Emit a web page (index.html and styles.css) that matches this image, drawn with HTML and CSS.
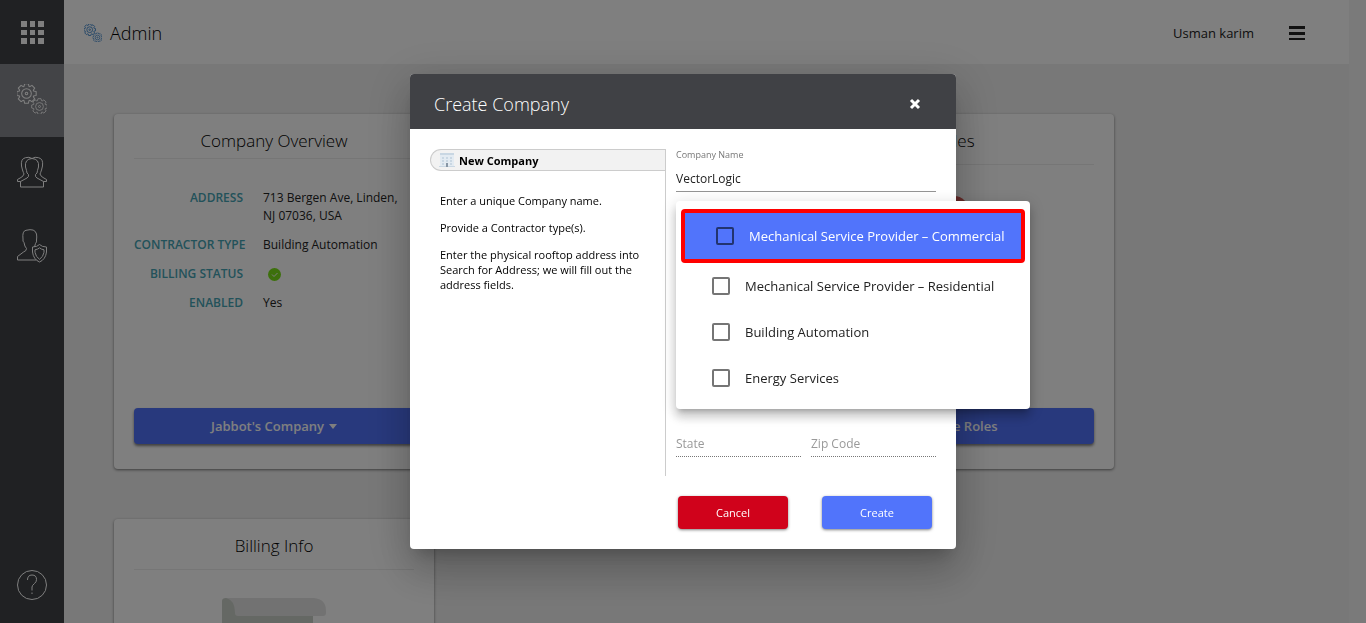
FILE: index.html
```html
<!DOCTYPE html>
<html lang="en">
<head>
<meta charset="utf-8">
<meta name="viewport" content="width=device-width, initial-scale=1">
<title>Admin</title>
<link rel="stylesheet" href="styles.css">
</head>
<body>
<svg class="defs" aria-hidden="true">
  <symbol id="gear" viewBox="-10 -10 20 20">
    <path d="M-2.4-6.8L-1.8-9.2H1.8L2.4-6.8 3.1-6.5 5.2-7.8 7.8-5.2 6.5-3.1 6.8-2.4 9.2-1.8V1.8L6.8 2.4 6.5 3.1 7.8 5.2 5.2 7.8 3.1 6.5 2.4 6.8 1.8 9.2H-1.8L-2.4 6.8-3.1 6.5-5.2 7.8-7.8 5.2-6.5 3.1-6.8 2.4-9.2 1.8V-1.8L-6.8-2.4-6.5-3.1-7.8-5.2-5.2-7.8-3.1-6.5Z"/>
    <circle r="4.6"/><circle r="1.2"/>
  </symbol>
  <symbol id="gears" viewBox="0 0 30 30">
    <use href="#gear" x="-1" y="-1" width="21" height="21"/>
    <use href="#gear" x="14" y="14" width="17" height="17"/>
  </symbol>
</svg>

<div class="app">
  <nav class="sidebar" aria-label="Main">
    <button class="side-item side-apps" aria-label="Apps">
      <svg width="23" height="23" viewBox="0 0 23 23" fill="currentColor"><path d="M0 0h6v6H0zM9 0h5v6H9zM17 0h6v6h-6zM0 9h6v5H0zM9 9h5v5H9zM17 9h6v5h-6zM0 17h6v6H0zM9 17h5v6H9zM17 17h6v6h-6z"/></svg>
    </button>
    <a class="side-item active" href="#" aria-label="Admin"><svg class="line" width="30" height="30"><use href="#gears"/></svg></a>
    <a class="side-item" href="#" aria-label="Users">
      <svg class="line" width="32" height="32" viewBox="0 0 32 32"><path d="M4.500 31v-5.500l6.500-3.500q2-1 1.500-3.500q-2-1-2-4l-1-3.500q-1-8 6.500-8.500q7.500.5 6.500 8.500l-1 3.500q0 3-2 4q-.5 2.500 1.500 3.500l6.500 3.500V31Z"/><path d="M16 2.500q-3-2-6.500-.8q-5 1-4 8.300l1 4q1 3 1.500 4q-.5 2-3 3.500L1.500 23.500v2h3M16 2.500q3-2 6.500-.8q5 1 4 8.300l-1 4q-1 3-1.500 4q.5 2 3 3.500l3.500 2v2h-3"/></svg>
    </a>
    <a class="side-item" href="#" aria-label="Permissions">
      <svg class="line" width="32" height="32" viewBox="0 0 32 32"><path d="M20.500 31H1.500v-3.500l6-4.500q3-1 3-3.500q-2-2-2.500-6Q6.500 12.500 7 10Q6 2 10 1.300q9-2.300 10.500 3.700q.5 3 0 6q.5 2-1 3.500L18.500 18"/><path d="M23.500 15.500q2.500 2.500 7 2.500v5q-1 7.500-7 10q-6-2.500-7-10v-5q4.500 0 7-2.500ZM23.500 18.800q1.500 1.500 4.500 2v2.500q-.7 4.500-4.500 7q-3.800-2.500-4.500-7v-2.500q3-.5 4.500-2Z"/></svg>
    </a>
    <a class="side-item side-help" href="#" aria-label="Help">
      <svg class="line" width="32" height="32" viewBox="0 0 32 32"><circle cx="16" cy="16" r="14.500"/><path d="M11.500 11q0-5 4.500-5t4.500 4.500q0 2.500-2 4Q16 16.500 16 18v3.500M16 23.500v1.500"/></svg>
    </a>
  </nav>

  <div class="page">
    <header class="topbar">
      <svg class="line brand" width="18" height="18"><use href="#gears"/></svg>
      <h1>Admin</h1>
      <span class="user">Usman karim</span>
      <button class="burger" aria-label="Menu"><svg width="16" height="14" viewBox="0 0 16 14" fill="currentColor"><path d="M0 0h16v3H0zM0 6h16v3H0zM0 12h16v2H0z"/></svg></button>
    </header>
    <main class="cards">
      <section class="card overview">
        <h2>Company Overview</h2>
        <dl>
          <dt>ADDRESS</dt><dd>713 Bergen Ave, Linden, NJ 07036, USA</dd>
          <dt>CONTRACTOR TYPE</dt><dd>Building Automation</dd>
          <dt>BILLING STATUS</dt><dd><svg class="ok" width="13" height="13" viewBox="0 0 13 13" role="img" aria-label="Active"><circle cx="6.500" cy="6.500" r="6.500" fill="#7ae018"/><path d="M4 6.500l2 2 3.500-3.500" fill="none" stroke="#fff"/></svg></dd>
          <dt>ENABLED</dt><dd>Yes</dd>
        </dl>
        <button class="wide-btn">Jabbot's Company <span class="caret"></span></button>
      </section>
      <section class="card roles">
        <h2>Roles</h2>
        <span class="dot"></span>
        <button class="wide-btn">Manage Roles</button>
      </section>
      <section class="card billing">
        <h2>Billing Info</h2>
        <svg class="receipt" width="104" height="80" viewBox="0 0 104 80"><path fill="#cad0c8" d="M0 3Q0 0 4 0h87v80H0Z"/><path fill="#e5e5e5" d="M4 0h88q12 1 12 13v2q0 3-3 3H16q-3 0-3-3Q13 2 4 0Z"/></svg>
      </section>
    </main>
  </div>
  <div class="gutter"></div>
</div>

<div class="backdrop">
  <div class="dialog" role="dialog" aria-modal="true" aria-labelledby="dlg-title">
    <header class="dialog-head">
      <h2 id="dlg-title">Create Company</h2>
      <button class="close" aria-label="Close"><svg width="10" height="10" viewBox="0 0 10 10"><path d="M1 1l8 8M9 1L1 9" stroke="currentColor" stroke-width="3"/></svg></button>
    </header>
    <form class="dialog-body">
      <aside class="steps">
        <h3 class="step">
          <svg width="16" height="16" viewBox="0 0 16 16"><path fill="#e3ebf2" d="M1 3h14v12H1z"/><path fill="#c9d7e3" d="M1 1h14v2H1zM3 5h2v2H3zM7 5h2v2H7zM11 5h2v2h-2zM3 8h2v2H3zM7 8h2v2H7zM11 8h2v2h-2zM3 11h2v2H3zM11 11h2v2h-2zM0 14h16v1H0z"/><path fill="#8796a5" d="M7 11h2v4H7z"/></svg>
          New Company
        </h3>
        <p>Enter a unique Company name.</p>
        <p>Provide a Contractor type(s).</p>
        <p>Enter the physical rooftop address into Search for Address; we will fill out the address fields.</p>
      </aside>
      <div class="fields">
        <div class="field">
          <label for="cname">Company Name</label>
          <input id="cname" type="text" value="VectorLogic">
          <div class="menu">
            <label class="option selected"><input type="checkbox"><span>Mechanical Service Provider – Commercial</span></label>
            <label class="option"><input type="checkbox"><span>Mechanical Service Provider – Residential</span></label>
            <label class="option"><input type="checkbox"><span>Building Automation</span></label>
            <label class="option"><input type="checkbox"><span>Energy Services</span></label>
          </div>
        </div>
        <div class="pair">
          <input class="dotted" type="text" placeholder="State" aria-label="State" disabled>
          <input class="dotted" type="text" placeholder="Zip Code" aria-label="Zip Code" disabled>
        </div>
        <div class="actions">
          <button type="button" class="btn cancel">Cancel</button>
          <button type="button" class="btn create">Create</button>
        </div>
      </div>
    </form>
  </div>
</div>
</body>
</html>
```

FILE: styles.css
```css
* { box-sizing: border-box; }
body { margin: 0; font-family: "Open Sans", "Noto Sans", sans-serif; font-size: 12px; color: #222; overflow: hidden; }
h1, h2, h3, p, dl, dd { margin: 0; font-weight: 400; }
button, input { font: inherit; }
button { border: 0; padding: 0; background: none; color: inherit; cursor: pointer; }
svg { display: block; overflow: visible; }
.defs { position: absolute; width: 0; height: 0; }
.line { fill: none; stroke: currentColor; stroke-width: 1; }

.app { display: grid; grid-template-columns: 64px 1fr 17px; height: 100vh; overflow: hidden; }
.sidebar { display: flex; flex-direction: column; background: #404246; color: #fff; }
.side-item { display: flex; align-items: center; justify-content: center; width: 100%; height: 73px; flex: none; padding-bottom: 4px; color: #fff; }
.side-apps { height: 64px; padding: 1px 0 0 1px; }
.active { background: #86888e; }
.side-help { margin-top: auto; height: 76px; padding: 0; }
.page { background: #f1f1f1; min-width: 0; overflow: hidden; }
.gutter { background: #f5f5f5; }

.topbar { display: flex; align-items: center; height: 64px; padding: 1px 44px 0 20px; background: #fff; }
.brand { color: #4a8ed0; stroke-width: 1.5; }
.topbar h1 { margin-left: 8px; font-size: 18px; font-weight: 300; color: #000; }
.user { margin-left: auto; font-size: 13px; }
.burger { margin-left: 35px; }

.cards { display: grid; grid-template-columns: repeat(3, 320px); grid-template-rows: 355px 355px; gap: 50px 20px; padding: 50px; }
.card { display: flex; flex-direction: column; padding: 12px 20px 25px; background: #fff; border-radius: 4px; box-shadow: 0 1px 3px rgba(0,0,0,.5); }
.card h2 { height: 39px; line-height: 30px; border-bottom: 1px solid #ececec; text-align: center; font-size: 17px; font-weight: 300; color: #000; }
.card.overview h2 { height: 33px; }
.roles { grid-column: 3; }
.overview dl { display: grid; grid-template-columns: 109px 1fr; column-gap: 20px; margin-top: 30px; line-height: 18px; row-gap: 11px; }
.overview dt { color: #45a4b4; text-align: right; font-weight: 600; white-space: nowrap; }
.overview dd { padding-right: 10px; }
.ok { margin: 3px 0 0 5px; }
.wide-btn { display: flex; align-items: center; justify-content: center; gap: 5px; height: 36px; margin-top: auto; flex: none; border-radius: 4px; background: #5173fb; color: #fff; font-size: 13px; font-weight: 600; box-shadow: 0 2px 3px rgba(0,0,0,.5); }
.caret { border: 4px solid transparent; border-top: 5px solid #fff; border-bottom: 0; }
.dot { width: 30px; height: 30px; margin: 31px auto 0; border-radius: 50%; background: #d65a56; }
.receipt { margin: 28px auto 0; }

.backdrop { position: fixed; inset: 0; display: grid; place-items: center; background: rgba(0,0,0,.5); }
.dialog { width: 546px; max-width: 80vw; border-radius: 4px; background: #fff; color: #000; box-shadow: 0 11px 15px -7px rgba(0,0,0,.2), 0 24px 38px 3px rgba(0,0,0,.14), 0 9px 46px 8px rgba(0,0,0,.12); }
.dialog-head { display: flex; align-items: center; justify-content: space-between; height: 55px; padding: 5px 36px 0 24px; border-radius: 4px 4px 0 0; background: #404145; color: #fff; }
.dialog-head h2 { font-size: 18px; font-weight: 300; }
.dialog-body { display: grid; grid-template-columns: 236px 1fr; column-gap: 10px; padding: 20px; }
.steps { height: 327px; border-right: 1px solid #ccc; font-size: 11px; line-height: 15px; }
.step { display: flex; align-items: center; gap: 4px; height: 22px; margin-bottom: 22px; padding-left: 8px; border: 1px solid #ccc; border-right: 0; border-radius: 11px 0 0 11px; background: #f2f2f2; font-size: 11px; font-weight: 700; }
.steps p { margin: 0 10px 12px; }
.fields { display: flex; flex-direction: column; }
.field { position: relative; }
.field > label { display: block; font-size: 9px; line-height: 12px; color: #777; }
.field > input { display: block; width: 100%; height: 31px; padding: 4px 0 0; border: 0; border-bottom: 1px solid #949494; outline: 0; font-size: 12px; color: #222; }
.menu { position: absolute; top: 52px; left: 0; width: 354px; padding: 8px 5px; border-radius: 4px; background: #fff; box-shadow: 0 5px 5px -3px rgba(0,0,0,.2), 0 8px 10px 1px rgba(0,0,0,.14), 0 3px 14px 2px rgba(0,0,0,.12); }
.option { display: flex; align-items: center; gap: 15px; height: 46px; padding-left: 31px; font-size: 13px; white-space: nowrap; color: #222; }
.option input { appearance: none; flex: none; width: 18px; height: 18px; margin: 0; border: 2px solid #757575; border-radius: 2px; }
.selected { height: 54px; border: 4px solid #f00; border-radius: 4px; background: #5174fb; color: #fff; }
.selected input { border-color: #22346f; }
.pair { display: grid; grid-template-columns: 1fr 1fr; gap: 10px; margin-top: 241px; }
.dotted { min-width: 0; height: 24px; padding: 0 0 2px; border: 0; border-bottom: 1px dotted #777; background: none; font-size: 12px; }
.dotted::placeholder { color: #999; }
.actions { display: flex; justify-content: space-between; margin-top: 39px; padding: 0 4px 0 2px; }
.btn { width: 110px; height: 33px; border-radius: 4px; color: #fff; font-size: 11px; box-shadow: 0 1px 3px rgba(0,0,0,.5); }
.cancel { background: #d0021b; }
.create { background: #5174fb; }
```
